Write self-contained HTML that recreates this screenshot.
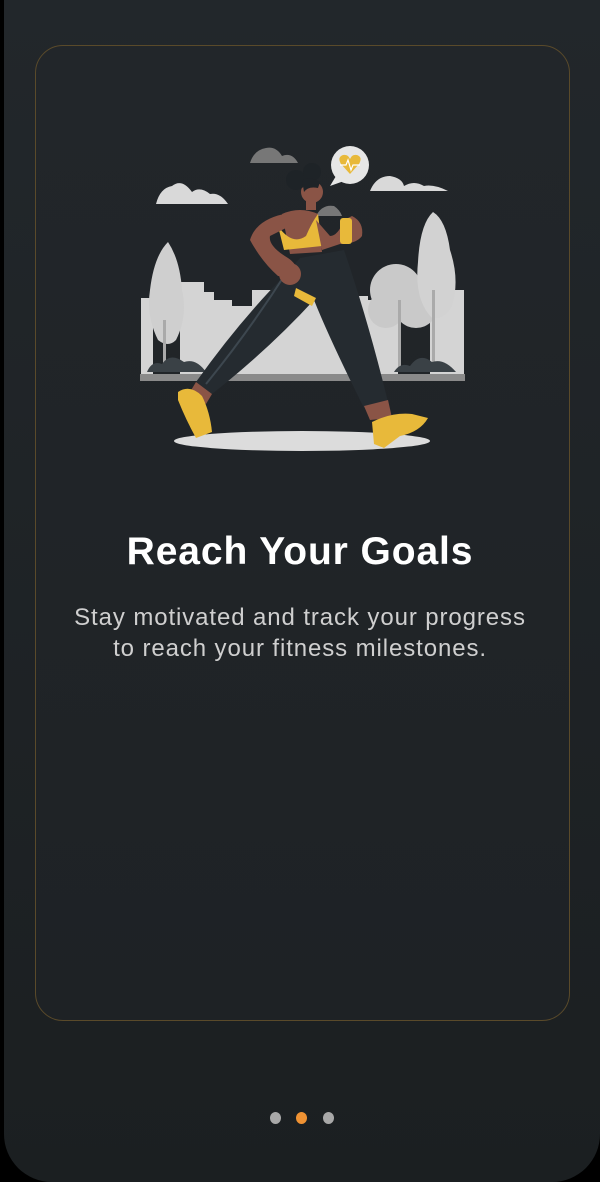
<!DOCTYPE html>
<html><head><meta charset="utf-8"><style>
html,body{margin:0;padding:0;background:#000;}
body{width:600px;height:1182px;position:relative;overflow:hidden;font-family:"Liberation Sans",Arial,sans-serif;}
.frame{position:absolute;left:4px;top:0;width:596px;height:1182px;background:linear-gradient(#22272b,#1b1f21);border-radius:0 0 48px 48px;}
.card{position:absolute;left:35px;top:45px;width:533px;height:974px;border:1.3px solid #5a4a2a;border-radius:28px;background:linear-gradient(#22262a,#1e2225);}
h1{position:absolute;left:0;top:529px;width:600px;margin:0;text-align:center;color:#fff;font-size:39px;font-weight:bold;line-height:46px;letter-spacing:0.9px;}
p{position:absolute;left:0;top:602px;width:600px;margin:0;text-align:center;color:#cfcfcf;font-size:24px;line-height:31px;letter-spacing:0.9px;}
.dot{position:absolute;top:1112px;width:11px;height:12px;border-radius:50%;background:#a8a8a8;}
svg{position:absolute;left:0;top:0;}
</style></head><body>
<div class="frame"></div>
<div class="card"></div>
<svg width="600" height="470" viewBox="0 0 600 470">
 <path d="M156 204 Q160 188 172 186 Q182 178 192 192 Q200 186 210 194 Q220 192 228 204Z" fill="#d9d9d9"/>
 <path d="M250 163 Q254 150 266 148 Q276 146 282 156 Q292 152 298 163Z" fill="#777"/>
 <path d="M370 191 Q376 176 390 176 Q402 178 404 186 Q414 180 424 186 Q434 184 448 191Z" fill="#d9d9d9"/>
 <path d="M316 216 Q322 204 334 206 Q340 210 342 216Z" fill="#777"/>
 <circle cx="350" cy="165" r="19" fill="#e6e6e6"/>
 <path d="M336 176 L330 186 L344 181Z" fill="#e6e6e6"/>
 <path d="M350 174 L341 164 Q337 157 343 155 Q348 154 350 159 Q352 154 357 155 Q363 157 359 164Z" fill="#e8b93a"/>
 <path d="M340 165 L346 165 L348 160 L351 170 L353 165 L360 165" stroke="#fff" stroke-width="1.2" fill="none"/>
 <g fill="#d4d4d4">
  <rect x="141" y="298" width="12" height="78"/>
  <rect x="180" y="282" width="24" height="94"/>
  <rect x="204" y="292" width="10" height="84"/>
  <rect x="214" y="300" width="18" height="76"/>
  <rect x="232" y="306" width="20" height="70"/>
  <rect x="252" y="290" width="20" height="86"/>
  <rect x="272" y="300" width="80" height="76"/>
  <rect x="328" y="284" width="18" height="92"/>
  <rect x="346" y="296" width="22" height="80"/>
  <rect x="368" y="300" width="30" height="76"/>
  <rect x="430" y="290" width="34" height="86"/>
 </g>
 <path d="M168 242 Q180 260 182 290 Q188 316 176 340 Q168 348 158 340 Q146 316 150 290 Q154 256 168 242Z" fill="#cfcfcf"/>
 <rect x="163" y="320" width="3" height="50" fill="#aaa"/>
 <circle cx="396" cy="290" r="26" fill="#c9c9c9"/>
 <circle cx="416" cy="306" r="22" fill="#c9c9c9"/>
 <circle cx="386" cy="310" r="18" fill="#c9c9c9"/>
 <rect x="398" y="300" width="3" height="72" fill="#aaa"/>
 <path d="M433 212 Q446 220 450 250 Q460 280 452 306 Q444 320 432 318 Q414 300 418 262 Q420 224 433 212Z" fill="#d2d2d2"/>
 <rect x="432" y="290" width="3" height="82" fill="#aaa"/>
 <path d="M147 372 Q152 360 162 364 Q170 352 184 362 Q196 358 206 372Z" fill="#3a4146"/>
 <path d="M394 372 Q400 362 410 366 Q420 352 432 362 Q444 358 456 372Z" fill="#3a4146"/>
 <rect x="140" y="374" width="325" height="7" fill="#8a8a8a"/>
 <ellipse cx="302" cy="441" rx="128" ry="10" fill="#dcdcdc"/>
 <path d="M300 258 L344 250 Q368 320 388 402 L364 408 Q330 340 314 300 Q268 350 212 394 L196 382 Q240 320 288 272Z" fill="#252b30"/>
 <path d="M296 288 L316 298 L312 306 L294 296Z" fill="#e8b93a"/>
 <path d="M288 270 Q250 330 206 384" stroke="#3d474f" stroke-width="2" fill="none"/>
 <path d="M196 382 L212 394 L206 404 L190 392Z" fill="#8a5446"/>
 <path d="M364 406 L388 400 L392 418 L370 420Z" fill="#8a5446"/>
 <path d="M178 392 Q190 384 202 396 Q210 412 212 432 L196 438 Q186 420 178 400Z" fill="#e8b93a"/>
 <path d="M372 422 Q392 412 412 414 L428 418 Q420 432 400 436 L384 448 L374 444Z" fill="#e8b93a"/>
 <path d="M282 214 Q300 206 318 214 L322 252 L290 254Z" fill="#8a5446"/>
 <path d="M278 226 Q292 246 306 236 Q312 222 318 214 L322 246 L284 250Z" fill="#e8b93a"/>
 <path d="M284 214 Q256 220 250 240 Q262 262 278 276 L296 278 Q300 266 288 258 Q268 246 270 236 Q282 230 290 226Z" fill="#8a5446"/>
 <circle cx="290" cy="274" r="11" fill="#8a5446"/>
 <path d="M316 220 L322 250 L340 244 Q356 244 362 236 Q364 222 352 216 L344 220 Q338 236 330 236Z" fill="#8a5446"/>
 <rect x="340" y="218" width="12" height="26" rx="3" fill="#e8b93a"/>
 <circle cx="312" cy="192" r="11" fill="#8a5446"/>
 <rect x="306" y="198" width="10" height="12" fill="#8a5446"/>
 <circle cx="296" cy="180" r="10" fill="#1e2327"/>
 <circle cx="312" cy="172" r="9" fill="#1e2327"/>
 <path d="M302 180 Q310 176 320 182 L318 188 Q308 186 304 192Z" fill="#1e2327"/>
</svg>
<h1>Reach Your Goals</h1>
<p>Stay motivated and track your progress<br>to reach your fitness milestones.</p>
<div class="dot" style="left:270px"></div>
<div class="dot" style="left:296px;background:#ef9233"></div>
<div class="dot" style="left:323px"></div>
</body></html>
